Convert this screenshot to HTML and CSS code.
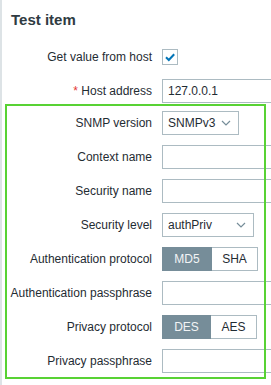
FILE: index.html
```html
<!DOCTYPE html>
<html lang="en">
<head>
    <meta charset="UTF-8">
    <title>Test item</title>
    <link rel="stylesheet" href="styles.css">
</head>
<body>
    <div class="panel">
        <h2 class="title">Test item</h2>

        <div class="form-list">
            <div class="form-row">
                <label>Get value from host</label>
                <div class="field">
                    <span class="checkbox">
                        <svg width="14" height="14" viewBox="0 0 14 14">
                            <path d="M3 7.2 L5.8 10 L11.2 4.2" fill="none" stroke="#0275b8" stroke-width="2"/>
                        </svg>
                    </span>
                </div>
            </div>
            <div class="form-row">
                <label><span class="required">*</span> Host address</label>
                <div class="field"><input type="text" value="127.0.0.1"></div>
            </div>
        </div>

        <!-- Bloque SNMPv3 -->
        <div class="snmp-box">
            <div class="form-row">
                <label>SNMP version</label>
                <div class="field">
                    <div class="select select-short">
                        <span>SNMPv3</span>
                        <svg width="10" height="6" viewBox="0 0 10 6"><path d="M1 1 L5 5 L9 1" fill="none" stroke="#768d99" stroke-width="1.2"/></svg>
                    </div>
                </div>
            </div>
            <div class="form-row">
                <label>Context name</label>
                <div class="field"><input type="text"></div>
            </div>
            <div class="form-row">
                <label>Security name</label>
                <div class="field"><input type="text"></div>
            </div>
            <div class="form-row">
                <label>Security level</label>
                <div class="field">
                    <div class="select select-long">
                        <span>authPriv</span>
                        <svg width="10" height="6" viewBox="0 0 10 6"><path d="M1 1 L5 5 L9 1" fill="none" stroke="#768d99" stroke-width="1.2"/></svg>
                    </div>
                </div>
            </div>
            <div class="form-row">
                <label>Authentication protocol</label>
                <div class="field">
                    <div class="segmented">
                        <span class="seg active seg-md5">MD5</span>
                        <span class="seg seg-sha">SHA</span>
                    </div>
                </div>
            </div>
            <div class="form-row">
                <label>Authentication passphrase</label>
                <div class="field"><input type="text"></div>
            </div>
            <div class="form-row">
                <label>Privacy protocol</label>
                <div class="field">
                    <div class="segmented">
                        <span class="seg active seg-des">DES</span>
                        <span class="seg seg-aes">AES</span>
                    </div>
                </div>
            </div>
            <div class="form-row">
                <label>Privacy passphrase</label>
                <div class="field"><input type="text"></div>
            </div>
        </div>
    </div>
</body>
</html>
```

FILE: styles.css
```css
/* General */
body {
    margin: 0;
    background: #fff;
    font-family: "Liberation Sans", Arial, sans-serif;
    font-size: 12px;
    color: #1f2c33;
    overflow: hidden;
}

.panel {
    border-left: 2px solid #dde3e6;
    height: 385px;
    padding-top: 11px;
    box-sizing: border-box;
    overflow: hidden;
}

.title {
    margin: 0 0 16px 9px;
    font-size: 15px;
    line-height: 18px;
    font-weight: bold;
    color: #2f3b42;
}

/* Rows */
.form-list,
.snmp-box {
    display: flex;
    flex-direction: column;
    gap: 10px;
}

.form-row {
    display: grid;
    grid-template-columns: 150px 1fr;
    column-gap: 10px;
    align-items: center;
    height: 24px;
}

.form-row label {
    text-align: right;
    line-height: 14px;
    white-space: nowrap;
}

.required {
    color: #e33734;
}

.field {
    display: flex;
    align-items: center;
    height: 24px;
    overflow: hidden;
}

/* Green highlight */
.snmp-box {
    margin: 3px 7px 0 5px;
    padding: 5px 0 4px;
    outline: 2px solid #58d234;
}

.snmp-box .form-row {
    grid-template-columns: 145px 1fr;
}

.snmp-box .field {
    margin-right: -7px;
}

/* Controls */
input {
    box-sizing: border-box;
    flex: 0 0 auto;
    width: 300px;
    height: 24px;
    margin: 0;
    padding: 0 5px;
    border: 1px solid #acbbc2;
    border-radius: 0;
    font-family: inherit;
    font-size: 12px;
    color: #1f2c33;
    background: #fff;
}

.checkbox {
    display: flex;
    align-items: center;
    justify-content: center;
    box-sizing: border-box;
    width: 16px;
    height: 16px;
    border: 1px solid #acbbc2;
    background: #fff;
}

.select {
    display: flex;
    align-items: center;
    justify-content: space-between;
    box-sizing: border-box;
    height: 24px;
    padding: 0 7px 0 5px;
    border: 1px solid #acbbc2;
    background: #fff;
}

.select-short {
    width: 77px;
}

.select-long {
    width: 92px;
}

.segmented {
    display: flex;
    height: 24px;
}

.seg {
    display: flex;
    align-items: center;
    justify-content: center;
    box-sizing: border-box;
    height: 24px;
    border: 1px solid #acbbc2;
    background: #fff;
    color: #1f2c33;
}

.seg.active {
    background: #768d99;
    border-color: #768d99;
    color: #f2f4f5;
}

.seg + .seg {
    border-left: none;
}

.seg-md5 { width: 50px; }
.seg-sha { width: 46px; }
.seg-des { width: 49px; }
.seg-aes { width: 46px; }
```
